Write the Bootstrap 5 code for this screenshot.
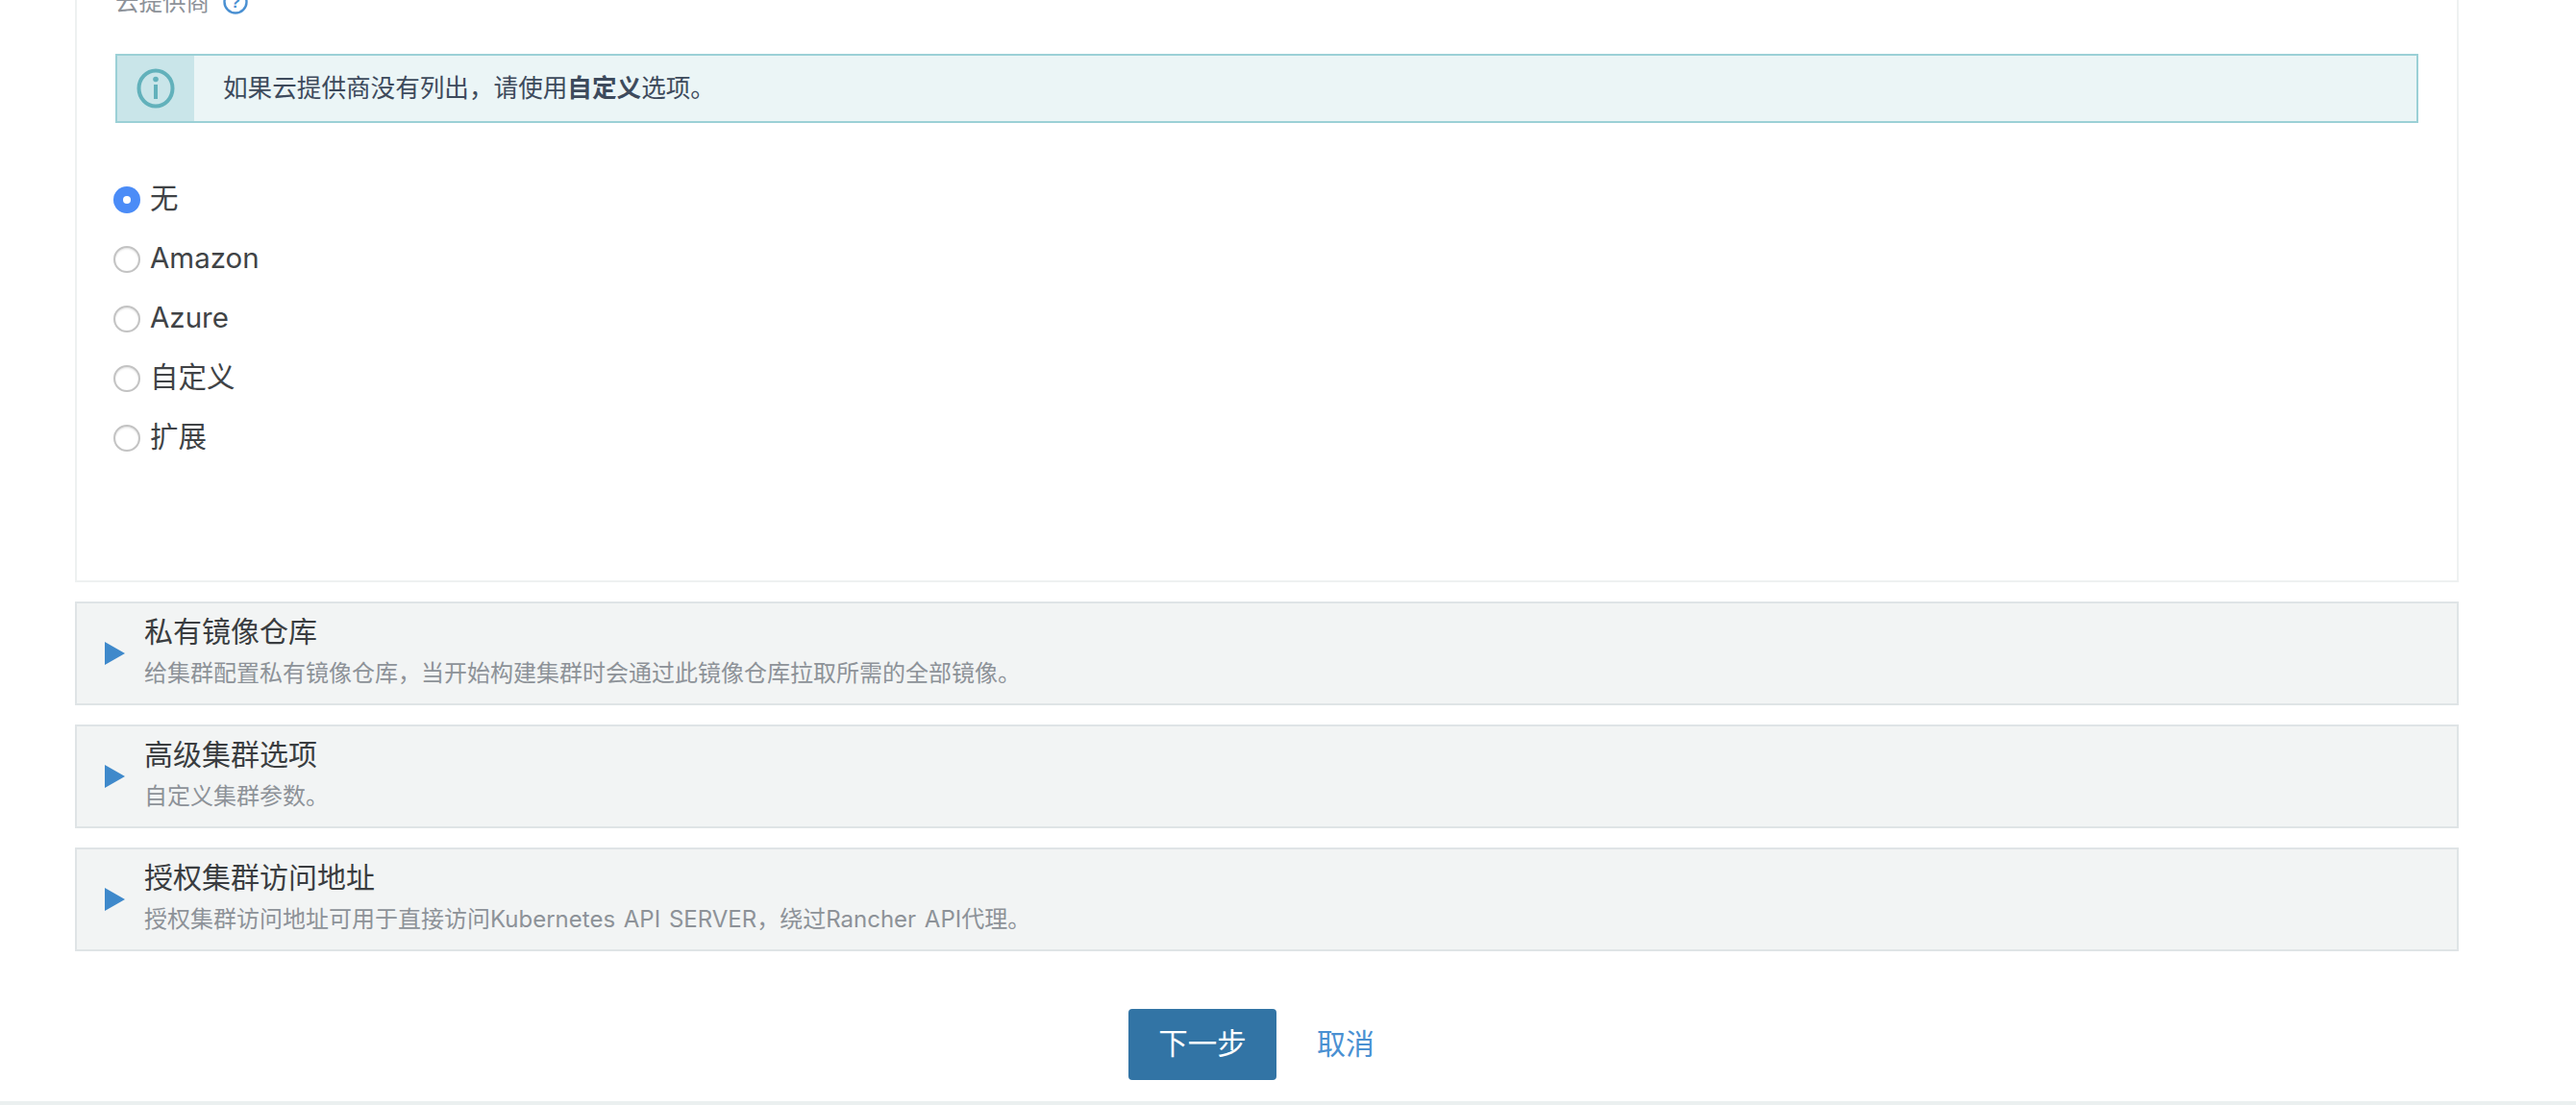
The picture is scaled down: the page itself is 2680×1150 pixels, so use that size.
<!DOCTYPE html>
<html lang="zh">
<head>
<meta charset="utf-8">
<title>集群</title>
<link href="https://cdn.jsdelivr.net/npm/bootstrap@5.3.0/dist/css/bootstrap.min.css" rel="stylesheet">
<style>
html,body{height:1150px;overflow:hidden;background:#fff}
body{font-family:Inter,"Noto Sans CJK SC",sans-serif;color:#3c3f44}
.shell{height:1146px;padding:0 122px 0 78px;overflow:hidden}
.foot-line{height:4px;background:#ebf0f0}
.panel-main{height:617px;border:2px solid #eef1f1;border-top:0;padding:0 40px;margin-bottom:20px}
.cloud-label{height:67px;margin-top:-11px;font-size:24.5px;line-height:26px;color:#8d9299}
.help-mark{width:26px;height:26px;margin-left:14px}
.note-box{height:72px;border:2px solid #9bd0d6;background:#ebf5f6;font-size:25.6px;color:#3d4a5c}
.note-icon{width:80px;background:#c9e5e9}
.note-text{padding-left:30px}
.radio-list{margin-top:48px;font-size:29.5px;line-height:62px;color:#404346}
.radio-row{height:62px;margin:0;gap:10px}
.radio-row span{transform:translateY(-1px)}
.radio-dot{width:28px;height:28px;margin:0 0 0 -2px;border-radius:50%;border:2px solid #c3c3c3;background:#fff;box-shadow:inset 0 1px 2px rgba(0,0,0,.12);appearance:none;flex:none;transform:translateY(1px)}
.radio-dot:checked{border:0;background:#4b8cf7;box-shadow:none;position:relative}
.radio-dot:checked::after{content:"";position:absolute;left:10px;top:10px;width:8px;height:8px;border-radius:50%;background:#fff}
.fold-row{height:108px;margin-bottom:20px;border:2px solid #dfe4e6;background:#f2f4f4;padding-left:29px}
.fold-arrow{width:21px;height:24px;flex:none;margin-right:20px}
.fold-copy{padding-bottom:6px}
.fold-title{font-size:30px;line-height:36px;color:#3a3d40}
.fold-desc{font-size:24px;line-height:30px;color:#8d9298;margin-top:11px;word-spacing:2px}
.btn-next{width:154px;height:74px;padding:0 0 2px;font-size:30.5px;line-height:1;background:#3274a5;border:0;color:#fff;border-radius:4px}
.btn-next:hover{background:#3274a5;color:#fff}
.btn-cancel{font-size:30px;color:#4a90d2;text-decoration:none;margin-left:42px;margin-right:32px;transform:translateY(-1px)}
.action-row{padding-top:40px}
</style>
</head>
<body>
<div class="shell">
  <section class="panel-main">
    <div class="cloud-label d-flex align-items-start">
      <span>云提供商</span>
      <svg class="help-mark" viewBox="0 0 26 26" aria-hidden="true"><circle cx="13" cy="13" r="11.5" fill="none" stroke="#4a90d2" stroke-width="2.4"/><text x="13" y="19" text-anchor="middle" font-size="17" font-family="Liberation Sans, sans-serif" font-weight="bold" fill="#4a90d2">?</text></svg>
    </div>
    <div class="note-box d-flex align-items-stretch">
      <div class="note-icon d-flex align-items-center justify-content-center">
        <svg width="40" height="42" viewBox="0 0 40 42" aria-hidden="true"><ellipse cx="20" cy="21" rx="17.5" ry="18.5" fill="none" stroke="#62b1bb" stroke-width="4"/><circle cx="20" cy="11.5" r="2.8" fill="#62b1bb"/><rect x="18" y="17" width="4" height="15" fill="#62b1bb"/></svg>
      </div>
      <div class="note-text d-flex align-items-center"><span>如果云提供商没有列出，请使用<strong>自定义</strong>选项。</span></div>
    </div>
    <div class="radio-list d-flex flex-column">
      <label class="radio-row d-flex align-items-center"><input class="radio-dot" type="radio" name="cloud" checked><span>无</span></label>
      <label class="radio-row d-flex align-items-center"><input class="radio-dot" type="radio" name="cloud"><span>Amazon</span></label>
      <label class="radio-row d-flex align-items-center"><input class="radio-dot" type="radio" name="cloud"><span>Azure</span></label>
      <label class="radio-row d-flex align-items-center"><input class="radio-dot" type="radio" name="cloud"><span>自定义</span></label>
      <label class="radio-row d-flex align-items-center"><input class="radio-dot" type="radio" name="cloud"><span>扩展</span></label>
    </div>
  </section>
  <div class="fold-row d-flex align-items-center">
    <svg class="fold-arrow" viewBox="0 0 21 24" aria-hidden="true"><polygon points="0,0 21,12 0,24" fill="#3f89cb"/></svg>
    <div class="fold-copy"><div class="fold-title">私有镜像仓库</div><div class="fold-desc">给集群配置私有镜像仓库，当开始构建集群时会通过此镜像仓库拉取所需的全部镜像。</div></div>
  </div>
  <div class="fold-row d-flex align-items-center">
    <svg class="fold-arrow" viewBox="0 0 21 24" aria-hidden="true"><polygon points="0,0 21,12 0,24" fill="#3f89cb"/></svg>
    <div class="fold-copy"><div class="fold-title">高级集群选项</div><div class="fold-desc">自定义集群参数。</div></div>
  </div>
  <div class="fold-row d-flex align-items-center">
    <svg class="fold-arrow" viewBox="0 0 21 24" aria-hidden="true"><polygon points="0,0 21,12 0,24" fill="#3f89cb"/></svg>
    <div class="fold-copy"><div class="fold-title">授权集群访问地址</div><div class="fold-desc">授权集群访问地址可用于直接访问Kubernetes API SERVER，绕过Rancher API代理。</div></div>
  </div>
  <div class="action-row d-flex justify-content-center align-items-center">
    <button type="button" class="btn btn-next">下一步</button>
    <a href="#" class="btn-cancel">取消</a>
  </div>
</div>
<div class="foot-line"></div>
<script src="https://cdn.jsdelivr.net/npm/bootstrap@5.3.0/dist/js/bootstrap.bundle.min.js"></script>
</body>
</html>
